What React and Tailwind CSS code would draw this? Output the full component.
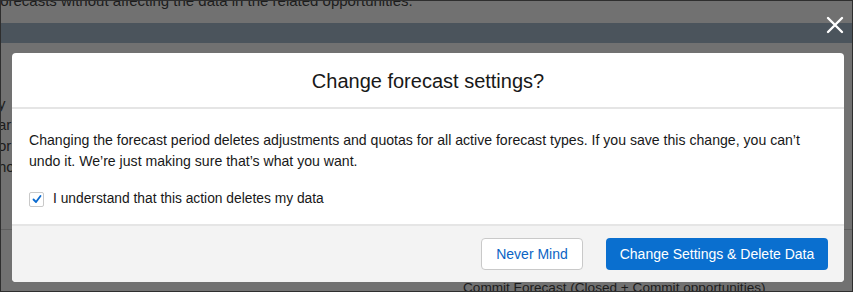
import React, { useState } from "react";

const font = { fontFamily: '"Liberation Sans", Arial, sans-serif' };

const CloseIcon = () => (
  <svg width="18" height="18" viewBox="0 0 18 18" fill="none">
    <path d="M2 2 L16 16 M16 2 L2 16" stroke="white" strokeWidth="2.4" strokeLinecap="round" />
  </svg>
);

const CheckMark = () => (
  <svg width="10" height="10" viewBox="0 0 10 10" fill="none">
    <path d="M1.5 5.5 L4 8 L8.5 2" stroke="#0a6bd0" strokeWidth="1.8" strokeLinecap="round" strokeLinejoin="round" />
  </svg>
);

const App = () => {
  const [checked, setChecked] = useState(true);

  return (
    <div className="relative w-[853px] h-[292px] overflow-hidden bg-[#717171] border border-[#2e2e2e] text-[#1b1b1b]" style={font}>
      {/* page behind the overlay */}
      <div className="flex flex-col h-full">
        <div className="h-[22px] overflow-hidden">
          <p className="-mt-[10px] -ml-[5px] text-[15px] leading-5 text-[#1c1c1c]">
            forecasts without affecting the data in the related opportunities.
          </p>
        </div>
        <div className="h-[20px] bg-[#4b545c]" />
        <div className="flex-1 flex flex-col">
          <div className="flex flex-col text-[15px] leading-[21px] text-[#1c1c1c] -ml-[3px] mt-[50px] gap-0">
            <span>y</span>
            <span>ar</span>
            <span>or</span>
            <span>ho</span>
          </div>
          <div className="mt-[52px] h-px bg-[#5f5f5f]" />
          <div className="mt-auto pl-[462px] text-[13.6px] leading-[14px] text-[#1c1c1c] -mb-[4px]">
            Commit Forecast (Closed + Commit opportunities)
          </div>
        </div>
      </div>

      <button className="absolute top-[15px] right-[8px] p-0">
        <CloseIcon />
      </button>

      {/* modal */}
      <div className="absolute left-[11px] top-[52px] w-[832px] flex flex-col rounded-[4px] overflow-hidden bg-white">
        <div className="h-[56px] flex items-center justify-center border-b-2 border-[#e5e5e5]">
          <h2 className="text-[20px] leading-6 text-[#181818] pt-[1px]">Change forecast settings?</h2>
        </div>
        <div className="h-[115px] px-[17px] pt-[21px] flex flex-col">
          <p className="text-[14.1px] leading-[21px] text-[#181818]">
            Changing the forecast period deletes adjustments and quotas for all active forecast types. If you save this
            change, you can’t undo it. We’re just making sure that’s what you want.
          </p>
          <label className="mt-[17px] flex items-center gap-[9px] cursor-pointer">
            <span
              onClick={() => setChecked(!checked)}
              className="w-[15px] h-[15px] rounded-[2px] border border-[#c9c9c9] bg-white flex items-center justify-center"
            >
              {checked && <CheckMark />}
            </span>
            <span className="text-[13.8px] text-[#181818]">I understand that this action deletes my data</span>
          </label>
        </div>
        <div className="h-[58px] bg-[#f3f3f3] border-t-2 border-[#e5e5e5] flex items-center justify-end gap-[23px] pr-[16px]">
          <button className="h-[32px] w-[102px] rounded-[4px] border border-[#c9c9c9] bg-white text-[14px] text-[#0b64c4]">
            Never Mind
          </button>
          <button className="h-[32px] w-[222px] rounded-[4px] bg-[#0a6fcf] text-[14px] text-white">
            Change Settings &amp; Delete Data
          </button>
        </div>
      </div>
    </div>
  );
};

export default App;
